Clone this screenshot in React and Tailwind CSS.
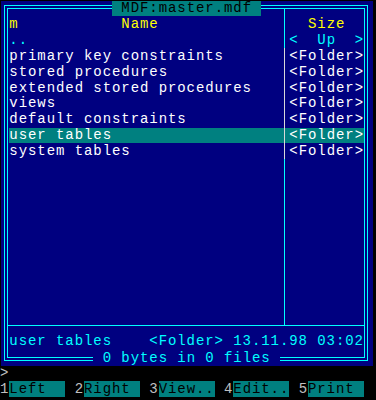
import React from 'react';

const CYAN = 'text-[#00ffff]';

const items = [
    { name: 'primary key constraints' },
    { name: 'stored procedures' },
    { name: 'extended stored procedures' },
    { name: 'views' },
    { name: 'default constraints' },
    { name: 'user tables', selected: true },
    { name: 'system tables' },
];

const keys = [
    { n: '1', label: 'Left' },
    { n: '2', label: 'Right' },
    { n: '3', label: 'View..' },
    { n: '4', label: 'Edit..' },
    { n: '5', label: 'Print' },
];

// one text line of the panel: name column | separator | size column
const Row = ({ name, size, sep = 'bg-[#00ffff]' }) => (
    <div className="flex h-[15.83px] whitespace-pre">
        <div className="w-[276px] pl-[1.33px] pt-[0.5px] leading-[15.3px] overflow-hidden">{name}</div>
        <div className={`w-[1px] ${sep}`} />
        <div className="w-[79px] pl-[4.33px] pt-[0.5px] leading-[15.3px]">{size}</div>
    </div>
);

const SepGap = ({ h }) => (
    <div className={`flex ${h}`}>
        <div className="w-[276px]" />
        <div className="w-[1px] bg-[#00ffff]" />
    </div>
);

const App = () => {
    return (
        <div className="relative w-[376px] h-[400px] bg-black overflow-hidden font-['Liberation_Mono',monospace] text-[14px] tracking-[0.93px] text-white">
            <div className="mt-[1px] ml-[1px] w-[372px] h-[365px] bg-[#000080] pt-[4px] pl-[3px]">
                <div className="w-[364px] border border-[#00ffff] p-[2px]">
                    <div className="w-[358px] border border-[#00ffff]">
                        <SepGap h="h-[7.83px]" />
                        <Row
                            name={<span className="text-[#ffff00]">{'m           Name'}</span>}
                            size={<span className="text-[#ffff00]">{'  Size'}</span>}
                        />
                        <Row
                            name={<span className={CYAN}>..</span>}
                            size={<span className={CYAN}>{'<  Up  >'}</span>}
                        />
                        {items.map(it => (
                            <div key={it.name} className="ml-[1.33px] w-[354.67px] overflow-hidden">
                                <div className={`-ml-[1.33px] ${it.selected ? 'bg-[#008080]' : ''}`}>
                                    <Row name={it.name} size="<Folder>" sep="bg-[#d8d8d8]" />
                                </div>
                            </div>
                        ))}
                        {Array.from({ length: 10 }).map((_, i) => (
                            <Row key={i} name="" size="" />
                        ))}
                        <SepGap h="h-[7.33px]" />
                        <div className="border-t border-[#00ffff] pt-[7.5px] pb-[7.67px]">
                            <div className={`h-[15.83px] pt-[0.5px] leading-[15.3px] pl-[1.33px] whitespace-pre ${CYAN}`}>
                                {'user tables    <Folder> 13.11.98 03:02'}
                            </div>
                        </div>
                    </div>
                </div>
            </div>

            <div className="h-[15px] leading-[15px] text-[#c0c0c0]">&gt;</div>

            <div className="flex h-[16px] whitespace-pre">
                {keys.map(k => (
                    <div key={k.n} className="flex">
                        <span className="w-[9.33px] leading-[16px] text-[#c0c0c0]">{k.n}</span>
                        <span className="w-[56px] leading-[16px] bg-[#008080] text-black">{k.label}</span>
                        <span className="w-[9.33px]" />
                    </div>
                ))}
            </div>

            {/* panel title sits over the top frame */}
            <div className="absolute left-[112px] top-[1px] h-[15px] w-[149.33px] bg-[#008080] text-black leading-[15px] whitespace-pre">
                {' MDF:master.mdf '}
            </div>

            {/* totals sit over the bottom frame */}
            <div className={`absolute left-[93.33px] top-[350px] h-[15px] pt-[0.5px] leading-[14.5px] w-[186.67px] bg-[#000080] whitespace-pre ${CYAN}`}>
                {' 0 bytes in 0 files '}
            </div>
        </div>
    );
};

export default App;
